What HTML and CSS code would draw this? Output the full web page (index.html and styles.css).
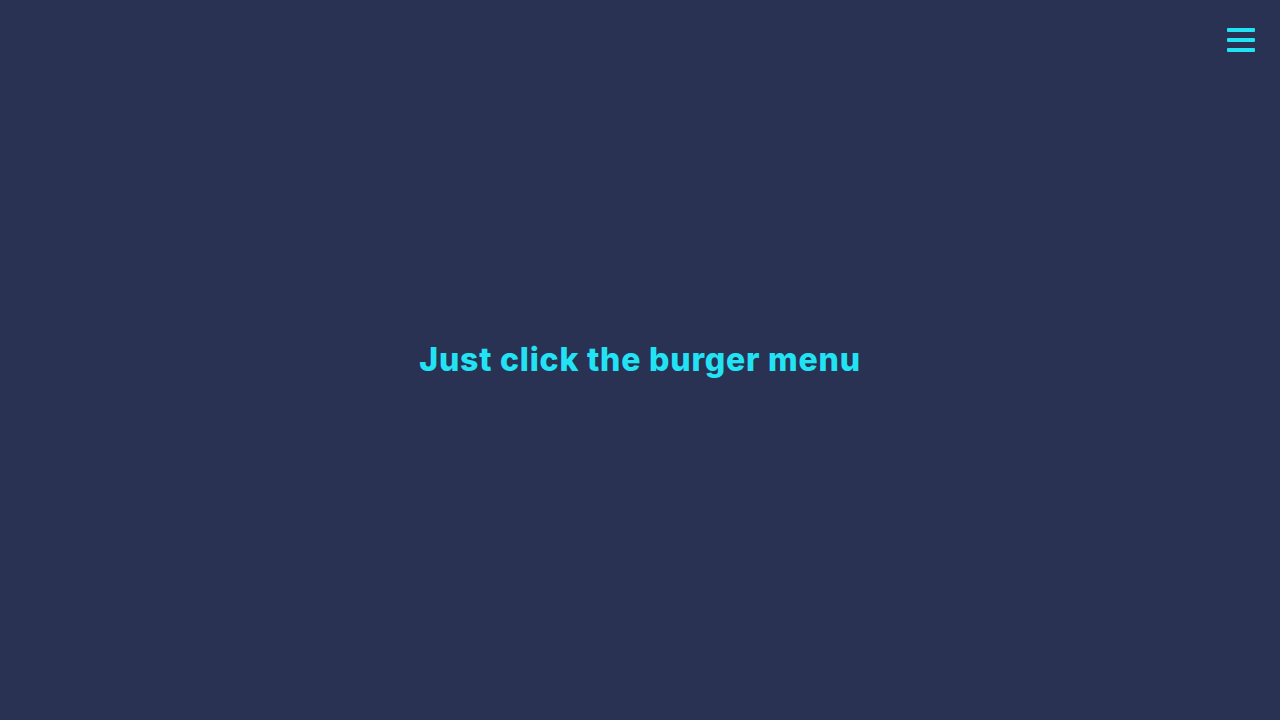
FILE: index.html
```html
<!DOCTYPE html>
<html lang="en">
<head>
    <meta charset="UTF-8">
    <meta name="viewport" content="width=device-width, initial-scale=1.0">
    <title>Burger menu</title>
    <link rel="stylesheet" href="styles.css">
</head>
<body>
    <header class="topbar">
        <button class="burger" aria-label="menu">
            <span></span>
            <span></span>
            <span></span>
        </button>
    </header>
    <main class="content">
        <h1>Just click the burger menu</h1>
    </main>
</body>
</html>
```

FILE: styles.css
```css
html, body {
    margin: 0;
    height: 100%;
}
body {
    background-color: #2a3254;
    font-family: Inter, "Noto Sans", sans-serif;
    color: #22e3f4;
    display: flex;
    flex-direction: column;
}
.topbar {
    display: flex;
    justify-content: flex-end;
    padding: 28px 25px 0 0;
}
.burger {
    background: none;
    border: none;
    padding: 0;
    width: 28px;
    display: flex;
    flex-direction: column;
    gap: 6px;
    cursor: pointer;
}
.burger span {
    display: block;
    height: 4px;
    background-color: #22e3f4;
    border-radius: 1px;
}
.content {
    flex: 1;
    display: flex;
    align-items: center;
    justify-content: center;
    margin-top: -53px;
}
.content h1 {
    margin: 0;
    font-size: 32px;
    font-weight: 800;
    letter-spacing: 0.8px;
}
```
